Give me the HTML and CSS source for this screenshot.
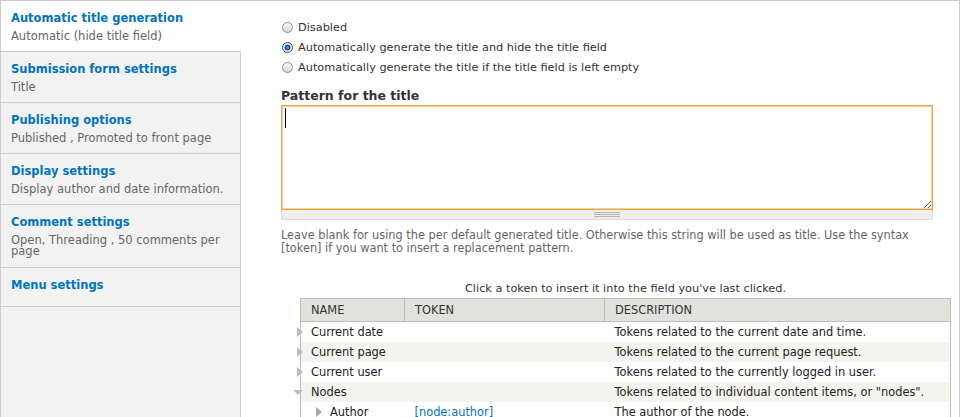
FILE: index.html
```html
<!DOCTYPE html>
<html>
<head>
<meta charset="utf-8">
<title>Automatic title generation</title>
<link rel="stylesheet" href="styles.css">
</head>
<body>
<div class="frame">
  <ul class="tabs">
    <li class="tab active"><a class="tab-title" href="#">Automatic title generation</a><span class="tab-summary">Automatic (hide title field)</span></li>
    <li class="tab"><a class="tab-title" href="#">Submission form settings</a><span class="tab-summary">Title</span></li>
    <li class="tab"><a class="tab-title" href="#">Publishing options</a><span class="tab-summary">Published , Promoted to front page</span></li>
    <li class="tab"><a class="tab-title" href="#">Display settings</a><span class="tab-summary">Display author and date information.</span></li>
    <li class="tab"><a class="tab-title" href="#">Comment settings</a><span class="tab-summary">Open, Threading , 50 comments per page</span></li>
    <li class="tab"><a class="tab-title" href="#">Menu settings</a></li>
  </ul>
  <div class="panel">
    <div class="radios">
      <label class="radio-row"><input type="radio" name="ant">Disabled</label>
      <label class="radio-row"><input type="radio" name="ant" checked>Automatically generate the title and hide the title field</label>
      <label class="radio-row"><input type="radio" name="ant">Automatically generate the title if the title field is left empty</label>
    </div>
    <label class="field-label">Pattern for the title</label>
    <textarea class="pattern"></textarea>
    <div class="grippie"><span class="grip-lines"></span></div>
    <div class="description">Leave blank for using the per default generated title. Otherwise this string will be used as title. Use the syntax [token] if you want to insert a replacement pattern.</div>
    <div class="token-tree">
      <p class="token-help">Click a token to insert it into the field you've last clicked.</p>
      <table class="tokens">
        <colgroup><col class="c-name"><col class="c-token"><col class="c-desc"></colgroup>
        <thead>
          <tr><th>NAME</th><th>TOKEN</th><th>DESCRIPTION</th></tr>
        </thead>
        <tbody>
          <tr><td><span class="exp closed"></span>Current date</td><td></td><td>Tokens related to the current date and time.</td></tr>
          <tr class="even"><td><span class="exp closed"></span>Current page</td><td></td><td>Tokens related to the current page request.</td></tr>
          <tr><td><span class="exp closed"></span>Current user</td><td></td><td>Tokens related to the currently logged in user.</td></tr>
          <tr class="even"><td><span class="exp open"></span>Nodes</td><td></td><td>Tokens related to individual content items, or "nodes".</td></tr>
          <tr><td class="child"><span class="exp closed dark"></span>Author</td><td><a class="tok" href="#">[node:author]</a></td><td>The author of the node.</td></tr>
        </tbody>
      </table>
    </div>
  </div>
</div>
</body>
</html>
```
FILE: styles.css
```css
html, body {
  margin: 0;
  padding: 0;
  background: #fff;
}
body {
  font-family: "DejaVu Sans", Verdana, sans-serif;
  color: #333;
  overflow: hidden;
}
.frame {
  display: flex;
  width: 960px;
  min-height: 430px;
  box-sizing: border-box;
  border: 1px solid #ccc;
  border-bottom: 0;
}
.tabs {
  list-style: none;
  margin: 0;
  padding: 0;
  width: 240px;
  flex: none;
  box-sizing: border-box;
  background: #f2f2f2;
  border-right: 1px solid #ccc;
  font-size: 11.5px;
}
.tab {
  padding: 10px 10px 9px 10px;
  border-bottom: 1px solid #ccc;
}
.tab.active {
  background: #fff;
  margin-right: -1px;
}
.tab-title {
  display: block;
  font-weight: bold;
  color: #0074bd;
  text-decoration: none;
  line-height: 15px;
  margin-bottom: 4.5px;
}
.tab-summary {
  display: block;
  color: #666;
  line-height: 11.5px;
}
.panel {
  flex: 1;
  padding: 16px 0 0 40px;
  font-size: 11.3px;
}
.radio-row {
  display: flex;
  align-items: center;
  height: 20px;
  color: #333;
}
.radio-row input {
  -webkit-appearance: none;
  appearance: none;
  width: 11px;
  height: 11px;
  margin: 0 5px 0 1px;
  box-sizing: border-box;
  border-radius: 50%;
  border: 1px solid #8e8e8e;
  background: linear-gradient(#fbfbfb, #d6d6d6);
}
.radio-row input:checked {
  border-color: #4d4d4d;
  background: radial-gradient(circle, #4aa3ea 0, #1d6cbc 1.8px, #123f70 2.7px, #f4f4f4 3.3px, #dcdcdc 100%);
}
.field-label {
  display: block;
  font-weight: bold;
  font-size: 12.5px;
  line-height: 16px;
  margin: 11px 0 1px;
  color: #333;
}
.pattern {
  display: block;
  width: 652px;
  height: 105px;
  margin: 0;
  padding: 2px 4px;
  box-sizing: border-box;
  border: 1px solid #dfa844;
  box-shadow: inset 0 0 0 1px #f0d49b;
  outline: none;
  resize: vertical;
  font: inherit;
  background: #fff linear-gradient(#000, #000) no-repeat 3px 2px / 1px 20px;
}
.grippie {
  width: 652px;
  height: 10px;
  box-sizing: border-box;
  background: #eee;
  border: 1px solid #ddd;
  border-top: 0;
  display: flex;
  justify-content: center;
  align-items: center;
}
.grip-lines {
  width: 26px;
  height: 5px;
  background: repeating-linear-gradient(to bottom, #b5b5b5 0, #b5b5b5 1px, transparent 1px, transparent 2px);
}
.description {
  width: 652px;
  margin-top: 8px;
  font-family: "DejaVu Sans Condensed", "DejaVu Sans", sans-serif;
  font-stretch: condensed;
  font-size: 12.6px;
  line-height: 13px;
  color: #666;
}
.token-tree {
  width: 651px;
  margin: 28px 0 0 19px;
}
.token-help {
  margin: 0 0 2px;
  text-align: center;
  line-height: 14px;
  color: #333;
}
.tokens {
  width: 651px;
  table-layout: fixed;
  border-collapse: collapse;
  border: 1px solid #bebfb9;
  color: #222;
  font-size: 11.4px;
}
.c-name { width: 104px; }
.c-token { width: 200px; }
.tokens th {
  height: 22px;
  padding: 0 10px;
  text-align: left;
  font-weight: normal;
  color: #333;
  background: #e1e2dc;
  border-right: 1px solid #bebfb9;
  border-bottom: 1px solid #bebfb9;
}
.tokens td {
  height: 20px;
  padding: 0 10px;
  line-height: 20px;
  white-space: nowrap;
}
.tokens tr.even td {
  background: #f3f4ee;
}
.tokens td.child {
  padding-left: 29px;
}
.exp {
  display: inline-block;
  width: 0;
  height: 0;
  vertical-align: middle;
}
.exp.closed {
  border-left: 6px solid #bcbcbc;
  border-top: 5px solid transparent;
  border-bottom: 5px solid transparent;
  margin: -2px 8px 0 -14px;
}
.exp.closed.dark {
  border-left-color: #a9a9a9;
}
.exp.open {
  border-top: 5px solid #bcbcbc;
  border-left: 5px solid transparent;
  border-right: 5px solid transparent;
  margin: 0 8px 0 -18px;
}
.tok {
  color: #0074bd;
  text-decoration: none;
}
```
